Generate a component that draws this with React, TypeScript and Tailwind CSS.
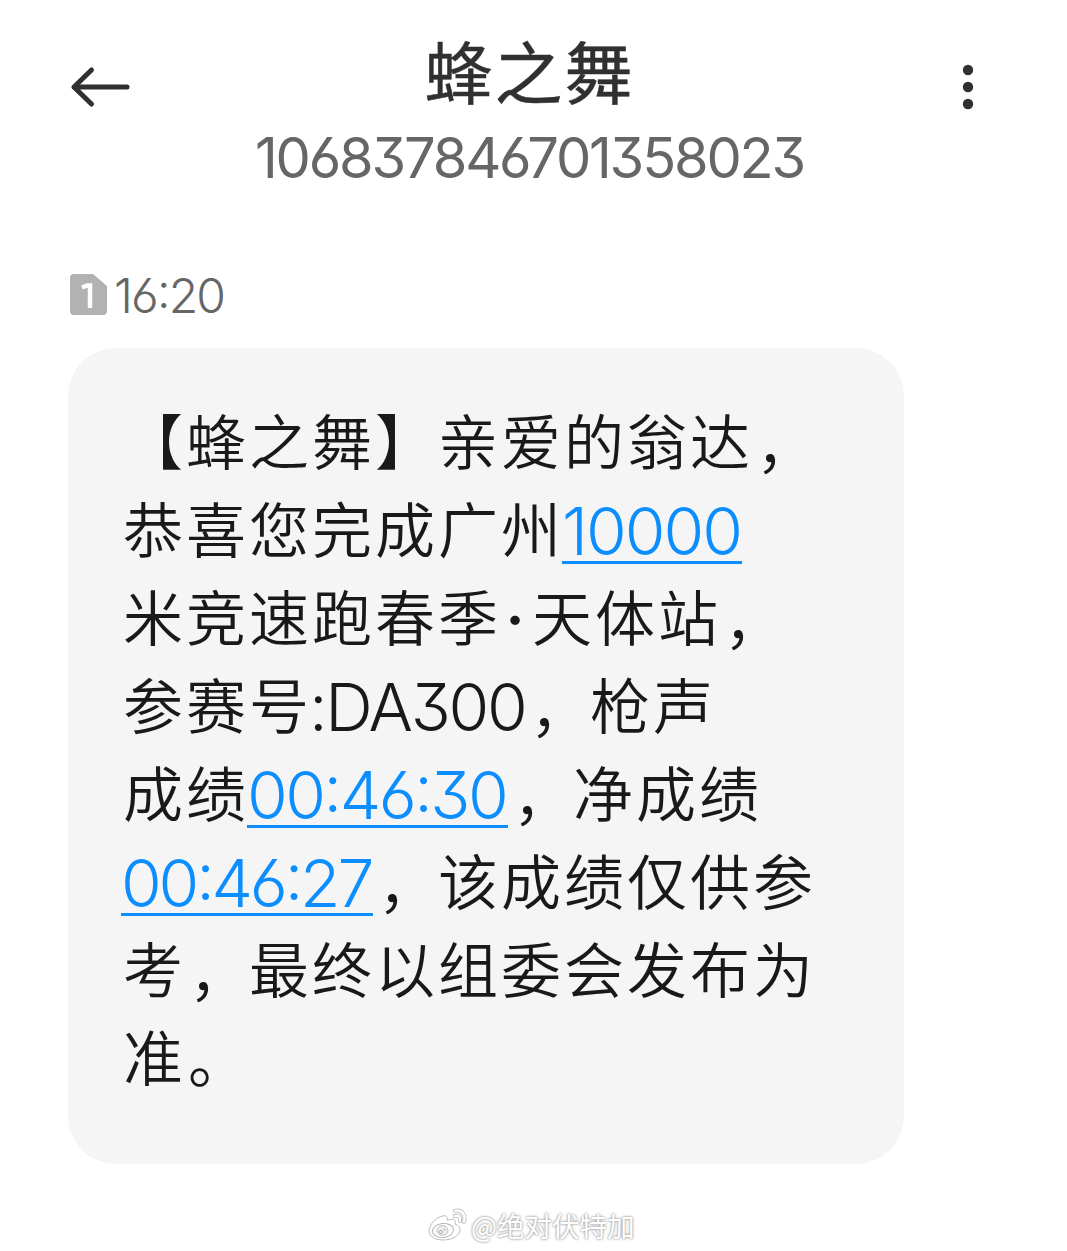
import type { ReactNode } from "react";

function Link({ children, className }: { children: ReactNode; className: string }) {
  return (
    <a className={`inline-block h-[79px] align-top font-['Inter'] text-[66px] font-light leading-[90px] text-[#0d8eff] ${className}`}>
      <span className="-ml-[2px] block h-[78px] border-b-[3px] border-[#0d8eff]">{children}</span>
    </a>
  );
}

function Comma() {
  return <span className="-mr-[3px] ml-[3px] inline-block h-[82px] align-[-3px] indent-0 leading-[82px]">，</span>;
}

function WeiboLogo() {
  return (
    <svg className="h-[34px] w-[40px]" viewBox="0 0 40 34" fill="none">
      <path d="M15 8C8 9 1 17 1 23c0 6 7 9 14 9 10 0 17-5 17-10 0-3-2-5-5-6 1-4-1-6-6-4-1 0-2 1-2 0 1-3-1-5-4-4Z" fill="white" stroke="#bcbcbc" />
      <ellipse cx="15" cy="22.500" rx="10.500" ry="7" fill="white" stroke="#b8b8b8" transform="rotate(-7 15 22.5)" />
      <ellipse cx="14.500" cy="22.500" rx="5.500" ry="4.800" fill="#eee" stroke="#bbb" />
      <circle cx="13" cy="24" r="1.500" stroke="#aaa" fill="white" />
      <circle cx="16.500" cy="21.500" r=".8" fill="#999" />
      <path d="M27 3c7-2 11 4 9 11M27 8c4-1 6 1 5 5" stroke="#b9b9b9" strokeWidth="4" strokeLinecap="round" />
      <path d="M27 3c7-2 11 4 9 11M27 8c4-1 6 1 5 5" stroke="white" strokeWidth="2.500" strokeLinecap="round" />
    </svg>
  );
}

export default function App() {
  return (
    <main className="flex h-[1251px] w-[1067px] flex-col overflow-hidden bg-white font-['Noto_Sans_CJK_SC',sans-serif] [font-feature-settings:'cv03','cv04','cv09','case']">
      <header className="flex h-[200px] justify-between pl-[68px] pr-[72px] pt-[30px]">
        <svg className="mt-[32px] h-[50px] w-[64px]" viewBox="0 0 64 50" fill="none" stroke="#303030" strokeWidth="5" strokeLinecap="round" strokeLinejoin="round">
          <path d="M59 25H6M23.500 8L6 25L23.500 42" />
        </svg>
        <div className="-ml-[4px] flex flex-col items-center whitespace-nowrap text-center">
          <h1 className="h-[88px] text-[68px] leading-[80px] tracking-[2px] text-[#303030] [-webkit-text-stroke:0.5px_#303030]">蜂之舞</h1>
          <p className="font-['Inter'] text-[56px] leading-[80px] tracking-[-2.200px] text-[#666]">106837846701358023</p>
        </div>
        <svg className="mt-[32px] h-[50px] w-[64px]" viewBox="0 0 64 50" fill="#303030">
          <circle cx="37" cy="8" r="5.200" />
          <circle cx="37" cy="25" r="5.200" />
          <circle cx="37" cy="42" r="5.200" />
        </svg>
      </header>
      <div className="ml-[70px] mt-[66px] flex h-[60px] items-center">
        <svg className="mb-[3px] h-[41px] w-[37px]" viewBox="0 0 37 41">
          <path d="M4 0H23L37 12V37Q37 41 33 41H4Q0 41 0 37V4Q0 0 4 0Z" fill="#b2b2b2" />
          <path d="M12 13.500L17 11.500H20V34" fill="none" stroke="white" strokeWidth="4.500" />
        </svg>
        <time className="ml-[7px] font-['Inter'] text-[48px] font-light leading-[60px] tracking-[-1.800px] text-[#666]">16:20</time>
      </div>
      <section className="ml-[68px] mt-[22px] h-[816px] w-[836px] rounded-[48px] bg-[#f5f5f5] pl-[53px] pt-[50px] text-[60px] font-[350] leading-[82px] text-[#191919] *:h-[88px] *:whitespace-nowrap [&>p]:tracking-[3px] [&>p]:indent-[2px] [&_a]:indent-0">
        <p>【蜂之舞】亲爱的翁达<Comma /></p>
        <p>恭喜您完成广州<Link className="w-[178px] tracking-[-2px]">10000</Link></p>
        <p>米竞速跑春季<span className="inline-block w-[31px] text-center indent-0 font-['Inter'] font-semibold">·</span>天体站<Comma /></p>
        <p>参赛号<span className="-ml-[3px] inline-block w-[218px] align-top font-['Inter'] indent-0 text-[66px] leading-[90px] tracking-[-2.300px] [font-feature-settings:'cv03','cv04','cv09']">:DA300</span><Comma />枪声</p>
        <p>成绩<Link className="w-[259px] tracking-[-2.500px]">00:46:30</Link><span className="ml-[2px]"><Comma />净成绩</span></p>
        <p><Link className="w-[250px] tracking-[-3.200px]">00:46:27</Link><span className="ml-[2px]"><Comma />该成绩仅供参</span></p>
        <p>考<Comma />最终以组委会发布为</p>
        <p>准<span className="ml-[2px] inline-block align-[-2px] indent-0 leading-[82px]">。</span></p>
      </section>
      <footer className="ml-[428px] mt-[43px] flex items-center">
        <WeiboLogo />
        <span className="ml-[3px] text-[27.500px] leading-[36px] text-white [text-shadow:0_0_3px_#999,0_0_2px_#aaa]">@绝对伏特加</span>
      </footer>
    </main>
  );
}
